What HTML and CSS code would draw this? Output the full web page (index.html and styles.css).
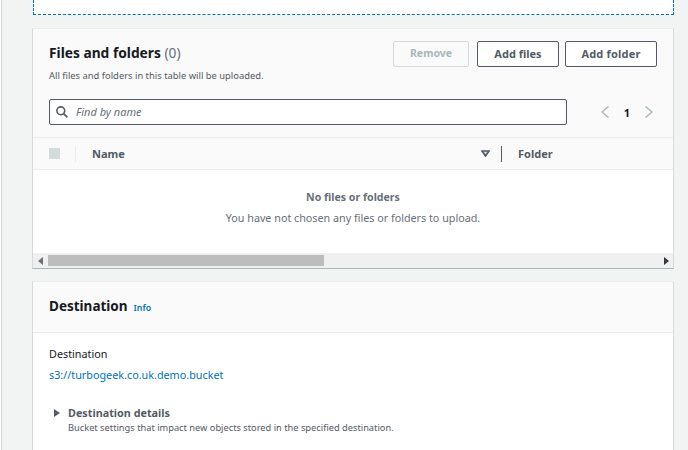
FILE: index.html
```html
<!DOCTYPE html>
<html lang="en">
<head>
<meta charset="utf-8">
<title>Upload</title>
<link rel="stylesheet" href="styles.css">
</head>
<body>
<main class="page">
  <div class="dropzone"></div>
  <section class="card files">
    <header class="files-head">
      <div class="title-row">
        <div class="title-block">
          <h2 class="title">Files and folders <span class="count">(0)</span></h2>
          <p class="desc">All files and folders in this table will be uploaded.</p>
        </div>
        <div class="actions">
          <button class="btn btn-remove">Remove</button>
          <button class="btn btn-files">Add files</button>
          <button class="btn btn-folder">Add folder</button>
        </div>
      </div>
      <div class="tools">
        <div class="search">
          <svg class="search-icon" width="12" height="12" viewBox="0 0 12 12"><circle cx="4.8" cy="4.800" r="3.900" fill="none" stroke="#545b64" stroke-width="1.600"/><path d="M7.600 7.600l3.800 3.800" stroke="#545b64" stroke-width="1.700" fill="none"/></svg>
          <span class="placeholder">Find by name</span>
        </div>
        <div class="pager">
          <svg width="8" height="12" viewBox="0 0 8 12"><path d="M7.500 .5L1 6l6.500 5.500" fill="none" stroke="#aab7b8" stroke-width="1.400"/></svg>
          <span class="page-num">1</span>
          <svg width="8" height="12" viewBox="0 0 8 12"><path d="M.5 .5L7 6 .5 11.500" fill="none" stroke="#aab7b8" stroke-width="1.400"/></svg>
        </div>
      </div>
    </header>
    <div class="thead">
      <div class="th-check"><span class="check"></span></div>
      <div class="th-name">
        <span>Name</span>
        <svg class="sort" width="9" height="7" viewBox="0 0 9 7"><path d="M1 1h7L4.500 6z" fill="#d5dbdb" stroke="#545b64" stroke-width="1.700"/></svg>
      </div>
      <div class="th-folder">Folder</div>
    </div>
    <div class="empty">
      <strong class="empty-title">No files or folders</strong>
      <span class="empty-text">You have not chosen any files or folders to upload.</span>
    </div>
    <div class="scrollbar">
      <svg class="arrow" width="5" height="8" viewBox="0 0 5 8"><path d="M5 0v8L0 4z" fill="#6b7278"/></svg>
      <div class="track"><div class="thumb"></div></div>
      <svg class="arrow" width="5" height="8" viewBox="0 0 5 8"><path d="M0 0v8l5-4z" fill="#33383d"/></svg>
    </div>
  </section>
  <section class="card dest">
    <header class="dest-head">
      <h2 class="title">Destination</h2>
      <a class="info">Info</a>
    </header>
    <div class="dest-body">
      <div class="label">Destination</div>
      <a class="bucket">s3://turbogeek.co.uk.demo.bucket</a>
      <div class="details">
        <svg class="caret" width="6" height="8" viewBox="0 0 6 8"><path d="M0 0l6 4-6 4z" fill="#545b64"/></svg>
        <div>
          <div class="details-title">Destination details</div>
          <div class="details-desc">Bucket settings that impact new objects stored in the specified destination.</div>
        </div>
      </div>
    </div>
  </section>
</main>
</body>
</html>
```
FILE: styles.css
```css
* { box-sizing: border-box; }
html, body { margin: 0; height: 100%; overflow: hidden; }
body {
  background: #fff;
  font-family: "Noto Sans", "Open Sans", sans-serif;
  color: #16191f;
  font-size: 12px;
}
.page {
  margin-left: 1px;
  height: 450px;
  background: #f2f3f3;
  border-left: 1px solid #d5dbdb;
  padding: 0 14px 0 30px;
  display: flex;
  flex-direction: column;
}
.dropzone {
  height: 15px;
  flex: none;
  background: #fff;
  border: 1px dashed #0073bb;
  border-top: 0;
  margin-left: 1px;
}
.card {
  background: #fff;
  border-top: 1px solid #eaeded;
  border-left: 1px solid #d5dbdb;
  border-right: 1px solid #d5dbdb;
  border-bottom: 1px solid #aab7b8;
}
.files { margin-top: 13px; height: 241px; flex: none; display: flex; flex-direction: column; }
.dest { margin-top: 12px; flex: 1; border-bottom: 0; }
.files-head { background: #fafafa; padding: 12px 16px 0; height: 109px; border-bottom: 1px solid #eaeded; }
.title-row { display: flex; justify-content: space-between; }
.title-block { padding-top: 1px; }
.title { margin: 0; font-size: 13.75px; line-height: 22px; font-weight: 700; color: #16191f; }
.count { font-weight: 400; color: #687078; }
.desc { margin: 5px 0 0; font-size: 9.4px; line-height: 14px; color: #545b64; }
.actions { display: flex; gap: 6px; }
.btn {
  height: 26px;
  background: #fff;
  border: 1px solid #545b64;
  border-radius: 2px;
  font: 700 11px "Noto Sans", sans-serif;
  color: #545b64;
  padding: 0 0 2px;
}
.btn-remove { width: 76px; margin-right: 2px; background: #fafafa; border-color: #d5dbdb; color: #aab7b8; font-size: 10.5px; }
.btn-files { width: 82px; }
.btn-folder { width: 92px; letter-spacing: .2px; }
.tools { display: flex; justify-content: space-between; margin-top: 16px; }
.search {
  width: 518px;
  height: 26px;
  background: #fff;
  border: 1px solid #545b64;
  border-radius: 2px;
  display: flex;
  align-items: center;
  padding: 0 0 1px 6px;
  gap: 8px;
}
.placeholder { font-size: 11px; font-style: italic; color: #687078; }
.pager { display: flex; align-items: center; gap: 15px; padding-right: 4px; height: 26px; }
.page-num { font-size: 11px; font-weight: 700; color: #16191f; }
.thead { display: flex; align-items: center; height: 32px; background: #fafafa; border-bottom: 1px solid #eaeded; flex: none; }
.th-check { width: 43px; padding-left: 16px; height: 16px; display: flex; align-items: center; border-right: 1px solid #eaeded; }
.check { width: 11px; height: 11px; background: #d5dbdb; }
.th-name { width: 426px; padding: 0 11px 0 16px; display: flex; justify-content: space-between; align-items: center; font-size: 11px; font-weight: 700; color: #545b64; height: 16px; border-right: 1px solid #545b64; }
.th-folder { padding-left: 16px; font-size: 11px; font-weight: 700; color: #545b64; }
.empty { flex: 1; display: flex; flex-direction: column; align-items: center; padding-top: 19px; color: #687078; font-size: 10.75px; }
.empty-title { font-weight: 700; line-height: 16px; font-size: 10.6px; }
.empty-text { line-height: 16px; margin-top: 5px; }
.scrollbar { height: 15px; background: #f0f0f0; display: flex; align-items: center; padding: 0 4px 0 5px; flex: none; }
.track { flex: 1; padding-left: 5px; height: 11px; }
.thumb { width: 276px; height: 11px; background: #bdbdbd; }
.dest-head { height: 51px; background: #fafafa; border-bottom: 1px solid #eaeded; display: flex; align-items: flex-start; padding: 13px 16px 0; gap: 6px; }
.dest-head .title { font-size: 13.5px; }
.info { font-size: 8.8px; font-weight: 600; color: #0073bb; line-height: 14px; margin-top: 6px; }
.dest-body { padding: 12px 16px; }
.label { font-size: 10.8px; line-height: 18px; color: #16191f; }
.bucket { display: block; margin-top: 3px; font-size: 10.8px; line-height: 18px; color: #0073bb; }
.details { display: flex; margin-top: 21px; padding-left: 5px; gap: 8px; }
.caret { margin-top: 4px; }
.details-title { font-size: 10.8px; font-weight: 700; line-height: 15px; color: #545b64; }
.details-desc { font-size: 9.27px; line-height: 14px; color: #545b64; margin-top: 1px; }
```
